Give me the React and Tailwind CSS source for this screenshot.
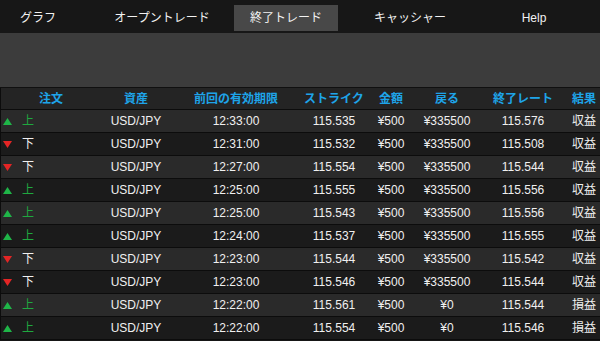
import React from "react";

const TABS = ["グラフ", "オープントレード", "終了トレード", "キャッシャー", "Help"];
const COLS = ["注文", "資産", "前回の有効期限", "ストライク", "金額", "戻る", "終了レート", "結果"];

const ROWS = [
  { up: true, time: "12:33:00", strike: "115.535", ret: "¥335500", rate: "115.576", res: "収益" },
  { up: false, time: "12:31:00", strike: "115.532", ret: "¥335500", rate: "115.508", res: "収益" },
  { up: false, time: "12:27:00", strike: "115.554", ret: "¥335500", rate: "115.544", res: "収益" },
  { up: true, time: "12:25:00", strike: "115.555", ret: "¥335500", rate: "115.556", res: "収益" },
  { up: true, time: "12:25:00", strike: "115.543", ret: "¥335500", rate: "115.556", res: "収益" },
  { up: true, time: "12:24:00", strike: "115.537", ret: "¥335500", rate: "115.555", res: "収益" },
  { up: false, time: "12:23:00", strike: "115.544", ret: "¥335500", rate: "115.542", res: "収益" },
  { up: false, time: "12:23:00", strike: "115.546", ret: "¥335500", rate: "115.544", res: "収益" },
  { up: true, time: "12:22:00", strike: "115.561", ret: "¥0", rate: "115.544", res: "損益" },
  { up: true, time: "12:22:00", strike: "115.554", ret: "¥0", rate: "115.546", res: "損益" },
];

const grid = "grid grid-cols-[100px_70px_130px_66px_48px_64px_88px_34px] items-center";

function Arrow({ up }) {
  return up ? (
    <svg width="9" height="7" viewBox="0 0 9 7" className="shrink-0">
      <polygon points="4.5,0 9,7 0,7" fill="#1fb548" />
    </svg>
  ) : (
    <svg width="9" height="7" viewBox="0 0 9 7" className="shrink-0">
      <polygon points="0,0 9,0 4.5,7" fill="#e42525" />
    </svg>
  );
}

export default function App() {
  return (
    <div
      className="w-[600px] h-[341px] overflow-hidden bg-[#161616] text-[12px] leading-none"
      style={{ fontFamily: '"Liberation Sans", "Noto Sans CJK JP", sans-serif' }}
    >
      <div className="h-[33px] bg-[#171717] pt-[5px] flex gap-[20px] ml-[-14px]">
        {TABS.map((t, i) => (
          <div
            key={t}
            className={`w-[104px] h-[26px] flex items-center justify-center text-[#f2f2f2] ${i === 2 ? "bg-[#484848]" : ""}`}
          >
            {t}
          </div>
        ))}
      </div>
      <div className="h-[55px] bg-[#3c3c3c] border-b border-[#101010]" />
      <div className="border-l border-[#0c0c0c]">
        <div className={`${grid} h-[22px] bg-[#242424] border-b border-[#0c0c0c] font-bold text-[#1ea4e9]`}>
          {COLS.map((c) => (
            <div key={c} className="text-center whitespace-nowrap">{c}</div>
          ))}
        </div>
        {ROWS.map((r, i) => (
          <div
            key={i}
            className={`${grid} h-[23px] border-b border-[#0c0c0c] text-[#f0f0f0] ${i % 2 === 0 ? "bg-[#2a2a2a]" : "bg-[#1b1b1b]"}`}
          >
            <div className="flex items-center pl-[2px] gap-[10px]">
              <Arrow up={r.up} />
              <span className={r.up ? "text-[#1fa83f]" : "text-[#f0f0f0]"}>{r.up ? "上" : "下"}</span>
            </div>
            <div className="text-center">USD/JPY</div>
            <div className="text-center">{r.time}</div>
            <div className="text-center">{r.strike}</div>
            <div className="text-center">¥500</div>
            <div className="text-center">{r.ret}</div>
            <div className="text-center">{r.rate}</div>
            <div className="text-center whitespace-nowrap">{r.res}</div>
          </div>
        ))}
      </div>
    </div>
  );
}
